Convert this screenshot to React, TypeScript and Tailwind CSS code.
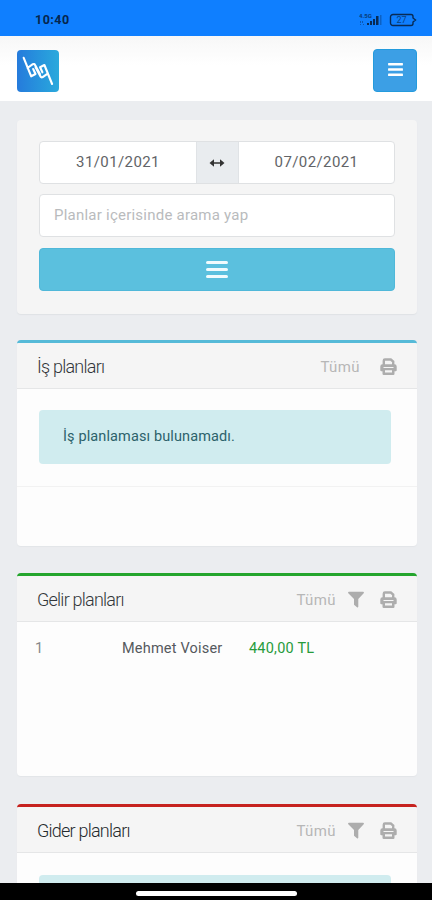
import type { ReactNode } from "react";
import { FaBars } from "react-icons/fa";

type PlanCardProps = {
  title: string;
  accent: string;
  className?: string;
  filterable?: boolean;
  darkTitle?: boolean;
  children?: ReactNode;
};

const StatusBar = () => (
  <div className="flex h-9 shrink-0 items-center justify-between bg-[#0f7fff] pt-1 pr-[15px] pl-[35px] text-[#082b55]">
    <span className="text-[12.5px] font-bold tracking-[0.5px] text-[#06264d]">
      10:40
    </span>
    <div className="flex items-center gap-[6px]">
      <svg width="24" height="14" viewBox="0 0 24 14" fill="currentColor">
        <text x="0" y="5" fontSize="6" fontWeight="700" opacity="0.8">
          4.5G
        </text>
        <path d="M1 8h1v2H1zM3 8h1v2H3zM1 11h1v1H1zM4 11h1v1H4z" opacity="0.45" />
        <path d="M8 10h2v2H8zM11 8h2v4h-2zM14 6h2v6h-2zM17 3h2.5v9H17z" />
        <path d="M21 2h1.5v10H21z" opacity="0.35" />
      </svg>
      <svg width="28" height="14" viewBox="0 0 28 14">
        <path
          d="M4 1.500h18a2 2 0 0 1 2 2V5l2.500 2L24 9v1.500a2 2 0 0 1-2 2H4a2.500 2.500 0 0 1-2.500-2.500V4A2.500 2.500 0 0 1 4 1.500z"
          fill="none"
          stroke="currentColor"
          strokeWidth="1.4"
        />
        <text x="7.500" y="10.300" fontSize="9" fill="currentColor" opacity="0.75">
          27
        </text>
      </svg>
    </div>
  </div>
);

const Logo = () => (
  <div className="flex h-[42px] w-[42px] items-center justify-center rounded-[4px] bg-linear-to-r from-[#267bdc] to-[#2ba9dc]">
    <svg
      width="42"
      height="42"
      viewBox="0 0 42 42"
      fill="none"
      stroke="white"
      strokeWidth="2.1"
      strokeLinecap="round"
      strokeLinejoin="round"
    >
      <path d="M6.700 7.800 14.200 26.300l4.300-2.300-2.300-5M10.500 18l5.300-3.800q1.500-.8 2.300.8l4.800 9" />
      <path d="M35.100 34 27.400 15l-4.300 2.300 2.300 5M31 23.300l-5.300 3.800q-1.500.8-2.300-.8l-4.800-9" />
    </svg>
  </div>
);

const ArrowsIcon = () => (
  <svg width="16" height="10" viewBox="0 0 16 10" fill="currentColor">
    <path d="M.5 5 5 1.300v2.900h6V1.300L15.500 5 11 8.700V5.800H5v2.900z" />
  </svg>
);

const FilterIcon = () => (
  <svg width="16" height="17" viewBox="0 0 16 17" fill="currentColor">
    <path d="M.9.800h14.200c.8 0 1.100.9.600 1.400L10.300 8v7.700c0 .7-.8 1-1.300.6l-2.700-2.200a.9.900 0 0 1-.3-.7V8L.3 2.200C-.2 1.700.1.800.9.800z" />
  </svg>
);

const PrintIcon = () => (
  <svg width="17" height="17" viewBox="0 0 17 17">
    <path
      d="M3.800 7.500V2.700q0-1.200 1.200-1.200h5.800L13.200 3.500v4"
      fill="none"
      stroke="currentColor"
      strokeWidth="2.400"
    />
    <path
      fill="currentColor"
      fillRule="evenodd"
      d="M2.500 6.300h12a2.200 2.200 0 0 1 2.200 2.200v3.700q0 1-1 1h-1.200v2.500q0 1.200-1.200 1.200H3.700q-1.200 0-1.200-1.200v-2.500H1.300q-1 0-1-1V8.500a2.200 2.200 0 0 1 2.200-2.200zM3.500 9v1h10V9zM5 12.200v2.200h7v-2.200z"
    />
  </svg>
);

const Header = () => (
  <header className="flex h-[65px] shrink-0 items-center justify-between bg-linear-to-b from-[#f7f7f7] to-white to-45% pt-1 pr-[15px] pl-[17px]">
    <Logo />
    <button className="flex h-[43px] w-11 items-center justify-center rounded-[4px] border border-[#249bdd] bg-[#3c9fe5] pb-0.5 text-white">
      <FaBars size={17} />
    </button>
  </header>
);

const Filters = () => (
  <section className="mt-[19px] flex h-[194px] shrink-0 flex-col rounded-[4px] bg-[#f5f5f5] px-[22px] pt-[21px] shadow-[0_1px_1px_#dfe2e5]">
    <div className="flex h-[43px] w-full overflow-hidden rounded-[4px] border border-[#dfe1e3] bg-white text-[15px] tracking-[0.4px] text-[#626467]">
      <div className="flex w-[156px] items-center justify-center">31/01/2021</div>
      <div className="flex w-[43px] items-center justify-center border-x border-[#e0e3e6] bg-[#e9ecef] pr-0.5 text-[#333]">
        <ArrowsIcon />
      </div>
      <div className="flex flex-1 items-center justify-center">07/02/2021</div>
    </div>
    <div className="mt-[10px] flex h-[43px] items-center rounded-[4px] border border-[#dfe1e3] bg-white pl-[14px] text-[15px] tracking-[0.23px] text-[#b9bbbd]">
      Planlar içerisinde arama yap
    </div>
    <button className="mt-[11px] flex h-[43px] items-center justify-center rounded-[4px] border border-[#50b8d9] bg-[#5bc0de]">
      <span className="flex w-[22px] flex-col gap-1">
        <span className="h-[3px] rounded-full bg-[#f1fbfd]" />
        <span className="h-[3px] rounded-full bg-[#f1fbfd]" />
        <span className="h-[3px] rounded-full bg-[#f1fbfd]" />
      </span>
    </button>
  </section>
);

const PlanCard = ({
  title,
  accent,
  className = "",
  filterable,
  darkTitle,
  children,
}: PlanCardProps) => (
  <section
    className={`flex shrink-0 flex-col overflow-hidden rounded-[4px] border-t-[3px] bg-[#fdfdfd] shadow-[0_1px_1px_#e3e5e8] ${accent} ${className}`}
  >
    <div className="flex h-[46px] shrink-0 items-center justify-between border-b border-[#e5e6e7] bg-[#f5f5f5] pt-px pr-5 pl-5">
      <h2
        className={`text-[18px] font-light tracking-[-0.77px] ${
          darkTitle ? "text-[#252a2e]" : "text-[#33373b]"
        }`}
      >
        {title}
      </h2>
      <div className="flex items-center text-[#adadad]">
        <span className="mr-[12px] pt-0.5 text-[15px] tracking-[0.4px] text-[#b7b7b7]">
          Tümü
        </span>
        {filterable && <FilterIcon />}
        <span className={filterable ? "ml-4" : "ml-2"}>
          <PrintIcon />
        </span>
      </div>
    </div>
    {children}
  </section>
);

const App = () => {
  return (
    <div
      className="flex h-[900px] w-[432px] flex-col overflow-hidden bg-[#ebedf0]"
      style={{ fontFamily: 'Roboto, "Liberation Sans", sans-serif' }}
    >
      <StatusBar />
      <Header />
      <main className="flex min-h-0 flex-1 flex-col overflow-hidden pr-[15px] pl-[17px]">
        <Filters />
        <PlanCard
          title="İş planları"
          accent="border-[#56bad8]"
          className="mt-[26px] h-[206px]"
        >
          <div className="border-b border-[#f2f2f2] pt-[21px] pr-[26px] pb-[22px] pl-[22px]">
            <div className="flex h-[54px] items-center rounded-[4px] bg-[#d0ecef] pl-6 text-[14.5px] tracking-[0.12px] text-[#2c626b]">
              İş planlaması bulunamadı.
            </div>
          </div>
        </PlanCard>
        <PlanCard
          title="Gelir planları"
          accent="border-[#24a52d]"
          className="mt-[27px] h-[203px]"
          filterable
        >
          <div className="flex pt-[17px] text-[14.5px] leading-[20px] text-[#55595d]">
            <span className="w-[105px] pl-[18px] text-[#85888b]">1</span>
            <span className="w-[127px] tracking-[0.2px]">Mehmet Voiser</span>
            <span className="tracking-[0.22px] text-[#279b3c]">440,00 TL</span>
          </div>
        </PlanCard>
        <PlanCard
          title="Gider planları"
          accent="border-[#c6221f]"
          className="mt-[28px] h-[206px]"
          filterable
          darkTitle
        >
          <div className="pt-[22px] pr-[26px] pl-[22px]">
            <div className="h-[54px] rounded-[4px] bg-[#d0ecef]" />
          </div>
        </PlanCard>
      </main>
      <div className="flex h-[17px] shrink-0 items-center justify-center bg-black pt-[3px]">
        <div className="h-[5px] w-[161px] rounded-full bg-white" />
      </div>
    </div>
  );
};

export default App;
